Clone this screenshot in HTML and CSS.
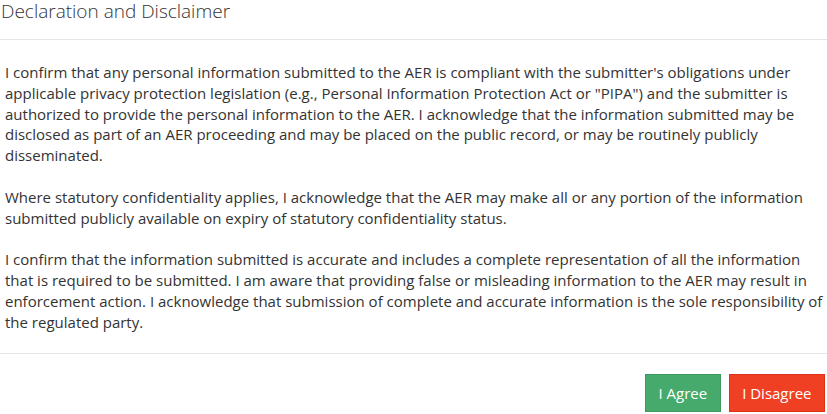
FILE: index.html
```html
<!DOCTYPE html>
<html lang="en">
<head>
<meta charset="utf-8">
<title>Declaration and Disclaimer</title>
<link rel="stylesheet" href="styles.css">
</head>
<body>
<div class="modal">
  <div class="modal-header">
    <h4 class="modal-title">Declaration and Disclaimer</h4>
  </div>
  <div class="modal-body">
    <p>I confirm that any personal information submitted to the AER is compliant with the submitter's obligations under applicable privacy protection legislation (e.g., Personal Information Protection Act or "PIPA") and the submitter is authorized to provide the personal information to the AER. I acknowledge that the information submitted may be disclosed as part of an AER proceeding and may be placed on the public record, or may be routinely publicly disseminated.</p>
    <p>Where statutory confidentiality applies, I acknowledge that the AER may make all or any portion of the information submitted publicly available on expiry of statutory confidentiality status.</p>
    <p>I confirm that the information submitted is accurate and includes a complete representation of all the information that is required to be submitted. I am aware that providing false or misleading information to the AER may result in enforcement action. I acknowledge that submission of complete and accurate information is the sole responsibility of the regulated party.</p>
  </div>
  <div class="modal-footer">
    <button class="btn btn-agree" type="button">I Agree</button>
    <button class="btn btn-disagree" type="button">I Disagree</button>
  </div>
</div>
</body>
</html>
```
FILE: styles.css
```css
html, body {
  margin: 0;
  padding: 0;
  background: #ffffff;
}
body {
  font-family: "Open Sans", "Liberation Sans", sans-serif;
  color: #333333;
  overflow: hidden;
}
.modal {
  width: 827px;
}
.modal-header {
  height: 39px;
  border-bottom: 1px solid #e5e5e5;
  padding-left: 1px;
}
.modal-title {
  margin: 0;
  font-size: 19px;
  font-weight: 300;
  line-height: 22px;
  color: #333333;
}
.modal-body {
  padding: 22px 4px 0 5px;
  height: 291px;
  font-size: 15px;
  line-height: 20.8px;
}
.modal-body p {
  margin: 0 0 20.8px 0;
}
.modal-footer {
  border-top: 1px solid #e5e5e5;
  padding: 20px 2px 0 0;
  display: flex;
  justify-content: flex-end;
  gap: 8px;
}
.btn {
  font-family: "Open Sans", "Liberation Sans", sans-serif;
  font-size: 15px;
  color: #ffffff;
  height: 38px;
  padding: 0 12.5px;
  border: 1px solid;
  border-radius: 0;
  cursor: pointer;
}
.btn-agree {
  background: #45aa6b;
  border-color: #3d9a5f;
}
.btn-disagree {
  background: #ef4024;
  border-color: #de3218;
}
```
